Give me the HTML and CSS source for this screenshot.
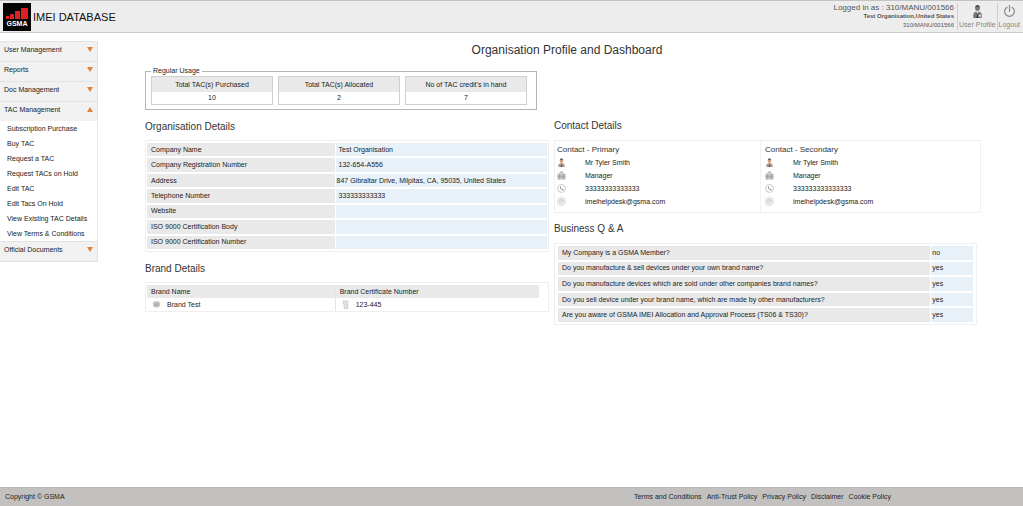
FILE: index.html
```html
<!DOCTYPE html>
<html lang="en">
<head>
<meta charset="utf-8">
<title>IMEI Database</title>
<link rel="stylesheet" href="styles.css">
</head>
<body>
<svg class="sprite" aria-hidden="true">
  <symbol id="person" viewBox="0 0 10 10">
    <path d="M1.500 10V8.200q0-1.700 2-2h3q2 .3 2 2V10z" fill="#a39a94"/>
    <path d="M3.800 5h2.400v1.800L5 8 3.800 6.800z" fill="#d9a176"/>
    <ellipse cx="5" cy="3.200" rx="1.800" ry="2.300" fill="#d8a27c"/>
    <path d="M3 3.200Q2.800.4 5 .4t2 2.800L6.300 2H4z" fill="#65483a"/>
    <path d="M4.500 7.300h1L5.700 10H4.300z" fill="#5a4c46"/>
  </symbol>
  <symbol id="case" viewBox="0 0 10 10">
    <path d="M3.500 3V1.300h3V3" fill="none" stroke="#999"/>
    <rect x=".5" y="3" width="9" height="6.500" rx=".6" fill="#bdbdbd"/>
    <path d="M.5 6h9M2.500 3v6.500M7.500 3v6.500" stroke="#999" stroke-width=".6"/>
  </symbol>
  <symbol id="phone" viewBox="0 0 10 10">
    <circle cx="5" cy="5" r="4.400" fill="#fff" stroke="#aaa" stroke-width=".7"/>
    <path d="M3.400 2.800Q3 6.200 6.800 7.200l.6-1-1.300-.8-.6.5Q4.500 5.200 4.300 4.300l.5-.5-.5-1.300z" fill="#888"/>
  </symbol>
  <symbol id="mail" viewBox="0 0 10 10">
    <circle cx="5" cy="5" r="4.400" fill="#fff" stroke="#bbb" stroke-width=".7"/>
    <circle cx="5" cy="5" r="1.200" fill="none" stroke="#aaa" stroke-width=".6"/>
    <path d="M6.200 3.800v1.700q.7 1 1.300-.3Q7.600 2.500 5 2.500T2.500 5 5 7.500h1.300" fill="none" stroke="#aaa" stroke-width=".6"/>
  </symbol>
</svg>

<header class="top">
  <a class="brand" href="#">
    <svg class="logo" viewBox="0 0 28 28" role="img" aria-label="GSMA">
      <rect width="28" height="28" fill="#050505"/>
      <path d="M3 13h3v3H3zM7 11h4v5H7zM12 8h5v8h-5zM18 5h7v11h-7z" fill="#e01e26"/>
      <text x="14" y="23" class="logo-text" text-anchor="middle">GSMA</text>
    </svg>
    <span>IMEI DATABASE</span>
  </a>
  <div class="session">
    <span class="login">Logged in as : 310/MANU/001566</span>
    <b>Test Organisation,United States</b>
    <span>310/MANU/001566</span>
  </div>
  <a class="action" href="#">
    <svg class="action-icon" viewBox="0 0 14 14"><ellipse cx="7" cy="3.500" rx="2.500" ry="3" fill="#777"/><path d="M4.500 3Q4.600 0 7 0t2.500 3L8.500 2h-3z" fill="#444"/><path d="M2.500 14v-4q0-2 3-3L7 9l1.500-2q3 1 3 3v4z" fill="#777"/><path d="M7 8.500 5.800 14h2z" fill="#333"/><path d="M8.500 10.500h2v2h-2z" fill="#eee"/></svg>
    User Profile
  </a>
  <a class="action" href="#">
    <svg class="action-icon" viewBox="0 0 14 14"><path d="M4.300 2.500a5.200 5.200 0 1 0 5.400 0M7 .5v6.300" fill="none" stroke="#888" stroke-width="1.300" stroke-linecap="round"/></svg>
    Logout
  </a>
</header>

<div class="page">
  <nav class="side">
    <button class="group" type="button">User Management<i class="arrow"></i></button>
    <button class="group" type="button">Reports<i class="arrow"></i></button>
    <button class="group" type="button">Doc Management<i class="arrow"></i></button>
    <button class="group" type="button" aria-expanded="true">TAC Management<i class="arrow up"></i></button>
    <ul class="sub">
      <li><a href="#">Subscription Purchase</a></li>
      <li><a href="#">Buy TAC</a></li>
      <li><a href="#">Request a TAC</a></li>
      <li><a href="#">Request TACs on Hold</a></li>
      <li><a href="#">Edit TAC</a></li>
      <li><a href="#">Edit Tacs On Hold</a></li>
      <li><a href="#">View Existing TAC Details</a></li>
      <li><a href="#">View Terms &amp; Conditions</a></li>
    </ul>
    <button class="group" type="button">Official Documents<i class="arrow"></i></button>
  </nav>

  <main>
    <h1>Organisation Profile and Dashboard</h1>
    <div class="columns">
      <div class="left">
        <fieldset class="usage">
          <legend>Regular Usage</legend>
          <dl><dt>Total TAC(s) Purchased</dt><dd>10</dd></dl>
          <dl><dt>Total TAC(s) Allocated</dt><dd>2</dd></dl>
          <dl><dt>No of TAC credit's in hand</dt><dd>7</dd></dl>
        </fieldset>

        <h2>Organisation Details</h2>
        <div class="frame">
          <table class="facts org">
            <tr><th scope="row">Company Name</th><td>Test Organisation</td></tr>
            <tr><th scope="row">Company Registration Number</th><td>132-654-A556</td></tr>
            <tr><th scope="row">Address</th><td class="address">847 Gibraltar Drive, Milpitas, CA, 95035, United States</td></tr>
            <tr><th scope="row">Telephone Number</th><td>333333333333</td></tr>
            <tr><th scope="row">Website</th><td></td></tr>
            <tr><th scope="row">ISO 9000 Certification Body</th><td></td></tr>
            <tr><th scope="row">ISO 9000 Certification Number</th><td></td></tr>
          </table>
        </div>

        <h2>Brand Details</h2>
        <div class="frame brands-frame">
          <table class="brands">
            <thead><tr><th scope="col">Brand Name</th><th scope="col">Brand Certificate Number</th></tr></thead>
            <tbody><tr>
              <td><span class="with-icon"><svg class="small-icon" viewBox="0 0 10 10"><path d="M5 1l1.300.6L7.800 1.500l.4 1.400L9.300 4l-.6 1.400.2 1.500-1.400.4L6.500 8.500 5 8l-1.500.5-1-1.200-1.400-.4.2-1.500L.7 4l1.100-1.100.4-1.400 1.500.1z" fill="#c4c4c4"/><path d="M3 4.300h4M3 6h4" stroke="#999" stroke-width=".8"/></svg>Brand Test</span></td>
              <td><span class="with-icon"><svg class="small-icon" viewBox="0 0 10 10"><path d="M2.500 1h5v8.500h-4V4h-1z" fill="#f4f4f4" stroke="#bbb" stroke-width=".8"/><path d="M4 3h2.500M4.500 5.500h2M4.500 7.500h2" stroke="#bbb" stroke-width=".8"/></svg>123-445</span></td>
            </tr></tbody>
          </table>
        </div>
      </div>

      <div class="right">
        <h2>Contact Details</h2>
        <div class="contacts">
          <section>
            <h3>Contact - Primary</h3>
            <ul>
              <li><svg><use href="#person"/></svg>Mr Tyler Smith</li>
              <li><svg><use href="#case"/></svg>Manager</li>
              <li><svg><use href="#phone"/></svg>33333333333333</li>
              <li><svg><use href="#mail"/></svg>imeihelpdesk@gsma.com</li>
            </ul>
          </section>
          <section>
            <h3>Contact - Secondary</h3>
            <ul>
              <li><svg><use href="#person"/></svg>Mr Tyler Smith</li>
              <li><svg><use href="#case"/></svg>Manager</li>
              <li><svg><use href="#phone"/></svg>333333333333333</li>
              <li><svg><use href="#mail"/></svg>imeihelpdesk@gsma.com</li>
            </ul>
          </section>
        </div>

        <h2>Business Q &amp; A</h2>
        <div class="frame qa-frame">
          <table class="facts qa">
            <tr><th scope="row">My Company is a GSMA Member?</th><td>no</td></tr>
            <tr><th scope="row">Do you manufacture &amp; sell devices under your own brand name?</th><td>yes</td></tr>
            <tr><th scope="row">Do you manufacture devices which are sold under other companies brand names?</th><td>yes</td></tr>
            <tr><th scope="row">Do you sell device under your brand name, which are made by other manufacturers?</th><td>yes</td></tr>
            <tr><th scope="row">Are you aware of GSMA IMEI Allocation and Approval Process (TS06 &amp; TS30)?</th><td>yes</td></tr>
          </table>
        </div>
      </div>
    </div>
  </main>
</div>

<footer class="bottom">
  <span>Copyright © GSMA</span>
  <nav class="legal">
    <a href="#">Terms and Conditions</a>
    <a href="#">Anti-Trust Policy</a>
    <a href="#">Privacy Policy</a>
    <a href="#">Disclaimer</a>
    <a href="#">Cookie Policy</a>
  </nav>
</footer>
</body>
</html>
```
FILE: styles.css
```css
* { box-sizing: border-box; }

:root {
  --text: 7px;
  --grey: #e9e9e9;
  --blue: #e9f1f8;
  --line: #efefef;
}

body {
  margin: 0;
  min-height: 100vh;
  display: flex;
  flex-direction: column;
  background: #fff;
  color: #222;
  font: var(--text)/10px "Liberation Sans", Arial, sans-serif;
}

a { color: inherit; text-decoration: none; }
ul, dl, dd { margin: 0; padding: 0; list-style: none; }
h1, h2, h3 { margin: 0; font-weight: normal; color: #333; }
.sprite { position: absolute; width: 0; height: 0; }

/* Header */
.top {
  display: flex;
  align-items: center;
  height: 33px;
  padding: 0 2px 0 3px;
  background: #ededed;
  border-top: 1px solid #c4c4c4;
  border-bottom: 1px solid #c9c9c9;
}
.brand {
  display: flex;
  align-items: center;
  gap: 2px;
  margin-right: auto;
  font-size: 11px;
  color: #111;
}
.logo { width: 28px; height: 28px; }
.logo-text { fill: #fff; font: bold 7px "Liberation Sans", Arial, sans-serif; }
.session {
  display: flex;
  flex-direction: column;
  padding-right: 3px;
  text-align: right;
  font-size: 6px;
  line-height: 9px;
  color: #555;
}
.session .login { font-size: 8px; }
.action {
  display: flex;
  flex-direction: column;
  align-items: center;
  gap: 2px;
  padding: 2px 1px 0;
  border-left: 1px solid #cfcfcf;
  font-size: 7px;
  color: #888;
}
.action-icon { width: 13px; height: 13px; }

/* Sidebar */
.page { display: flex; flex: 1; }
.side { flex: none; width: 98px; margin-top: 8px; }
.group {
  display: flex;
  align-items: center;
  justify-content: space-between;
  width: 100%;
  height: 20px;
  padding: 0 4px 4px;
  border: solid #e2e2e2;
  border-width: 1px 1px 0 0;
  background: #f1f1f1;
  color: #222;
  font: inherit;
}
.group:last-child { height: 21px; border-bottom-width: 1px; }
.arrow {
  border: solid transparent;
  border-width: 5px 3px 0;
  border-top-color: #e38235;
}
.arrow.up { border-width: 0 3px 5px; border-bottom-color: #e38235; }
.sub {
  padding: 0 7px;
  border-right: 1px solid #e8e8e8;
  line-height: 15px;
}

/* Content */
main { flex: 1; padding: 10px 34px 20px 47px; }
h1 { font-size: 12px; line-height: 14px; text-align: center; }
h2 { font-size: 10px; line-height: 12px; }
.columns { display: grid; grid-template-columns: 404fr 427fr; gap: 5px; padding-right: 8px; }
.left { padding-top: 9px; }
.right { padding-top: 63px; }
.usage {
  display: grid;
  grid-template-columns: 1fr 1fr 1fr;
  gap: 5px;
  width: 97%;
  margin: 0 0 11px;
  padding: 0 9px 4px 5px;
  border: 1px solid #b5b5b5;
}
.usage legend { padding: 0 2px; }
.usage dl { border: 1px solid #cfcfcf; text-align: center; }
.usage dt { background: var(--grey); line-height: 15px; }
.usage dd { line-height: 12px; }

.frame { border: 1px solid var(--line); }
.facts { width: 100%; border-collapse: separate; border-spacing: 1px 2px; }
.facts th, .facts td { padding: 0 4px; text-align: left; font-weight: normal; }
.facts th { background: var(--grey); }
.facts td { background: var(--blue); }
.org { height: 110px; }
.org th { width: 47%; }
.org td { padding-left: 3px; }
.org .address { padding-left: 1px; }
.left .frame { margin: 7px 0 11px; }
.left .brands-frame { padding: 2px 9px 0 1px; margin-bottom: 0; }
.brands { width: 100%; border-collapse: collapse; table-layout: fixed; }
.brands th { padding: 0 4px; background: var(--grey); text-align: left; font-weight: normal; line-height: 13px; }
.brands td { padding: 0 5px; height: 13px; }
.brands th + th, .brands td + td { border-left: 1px solid #e4e4e4; }
.brands th + th { width: 52%; }
.with-icon { display: flex; align-items: center; gap: 6px; }
.small-icon { width: 9px; height: 9px; }

.contacts {
  display: grid;
  grid-template-columns: 206fr 221fr;
  margin: 8px 0 10px;
  border: 1px solid var(--line);
}
.contacts section { padding: 3px 2px 4px; }
.contacts section + section { border-left: 1px solid #f3f3f3; padding-left: 4px; }
h3 { font-size: 8px; line-height: 12px; }
.contacts li { display: flex; align-items: center; height: 13px; gap: 19px; }
.contacts svg { width: 9px; height: 9px; }
.qa-frame { width: 99%; margin-top: 8px; padding: 0 2px; }
.qa { height: 80px; }
.qa td { width: 10%; padding-left: 1px; }

/* Footer */
.bottom {
  display: flex;
  justify-content: space-between;
  align-items: center;
  height: 19px;
  padding: 0 132px 1px 5px;
  background: #c3c1c0;
  border-top: 1px solid #b9b7b7;
}
.legal { display: flex; gap: 5px; }
```
